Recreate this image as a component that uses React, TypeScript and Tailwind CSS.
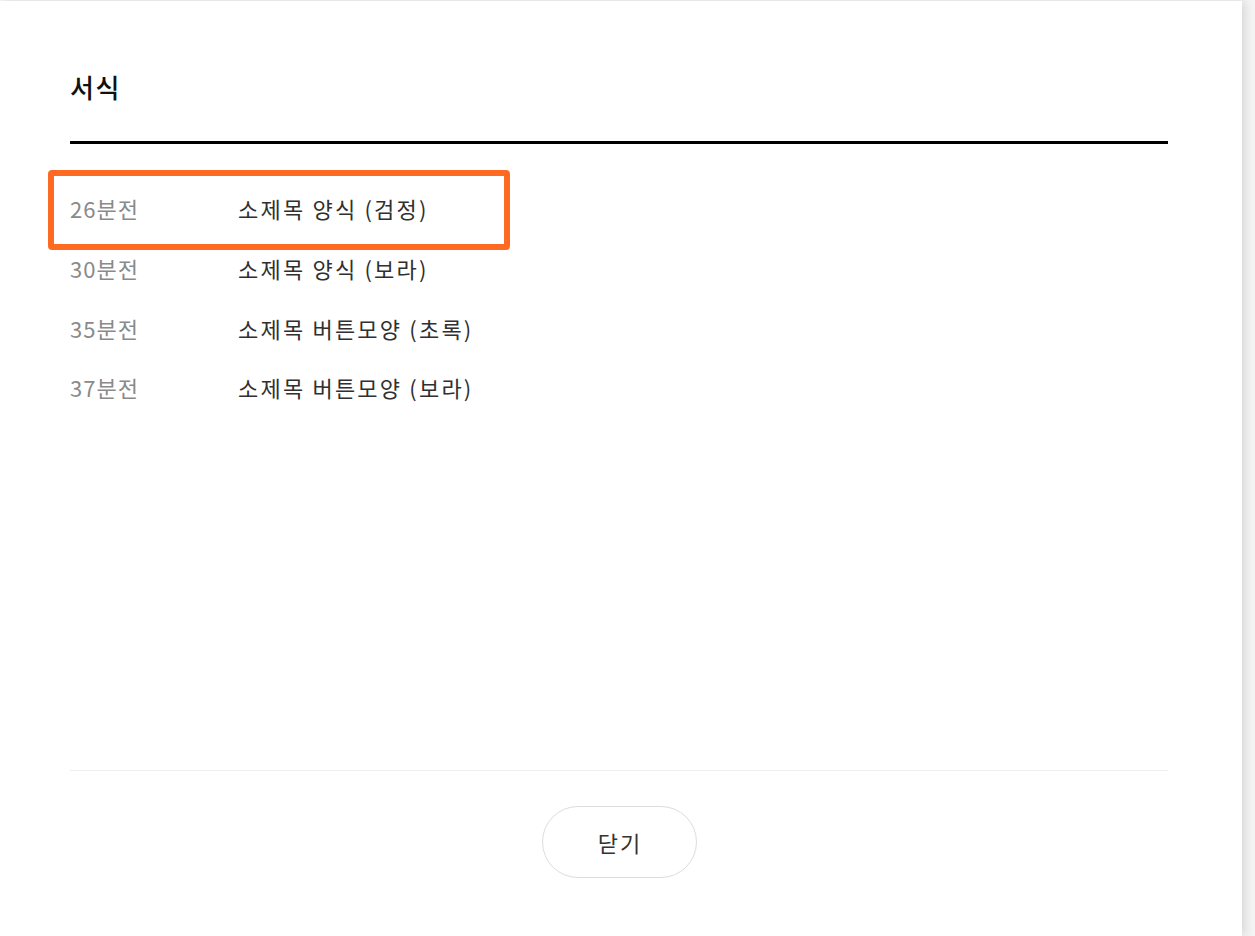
import React from "react";

const rows = [
  { time: "26분전", title: "소제목 양식 (검정)", active: true },
  { time: "30분전", title: "소제목 양식 (보라)" },
  { time: "35분전", title: "소제목 버튼모양 (초록)" },
  { time: "37분전", title: "소제목 버튼모양 (보라)" },
];

export default function App() {
  return (
    <div
      className="flex h-[936px] w-full overflow-hidden bg-[#f4f4f4]"
      style={{ fontFamily: '"Noto Sans CJK KR", "Noto Sans", sans-serif' }}
    >
      <div className="mt-[1px] flex h-[935px] w-[1242px] flex-col bg-white pr-[74px] pl-[70px] shadow-[3px_0_10px_rgba(0,0,0,0.12)]">
        <div className="pt-[73px] pb-[41px]">
          <h1 className="text-[26px] leading-[26px] font-medium tracking-[1.5px] text-[#111]">서식</h1>
        </div>
        <div className="h-[3px] w-full bg-black" />
        <div className="flex-1 pt-[35px]">
          {rows.map((r, i) => (
            <div key={i} className="relative flex h-[59.7px] items-center text-[22px] tracking-[2.2px]">
              {r.active && (
                <div className="pointer-events-none absolute top-[-9.5px] left-[-22px] h-[80px] w-[462px] rounded-[4px] border-[6px] border-[#ff6a22]" />
              )}
              <span className="w-[168px] tracking-[1px] text-[#8a8a8a]">{r.time}</span>
              <span className="text-[#303030]">{r.title}</span>
            </div>
          ))}
        </div>
        <div className="flex flex-col items-center border-t border-[#eeeeee] pt-[35px] pb-[58px]">
          <button className="h-[72px] w-[155px] rounded-full border border-[#dddddd] bg-white pl-[2px] text-[22px] tracking-[2px] text-[#333]">
            닫기
          </button>
        </div>
      </div>
    </div>
  );
}
